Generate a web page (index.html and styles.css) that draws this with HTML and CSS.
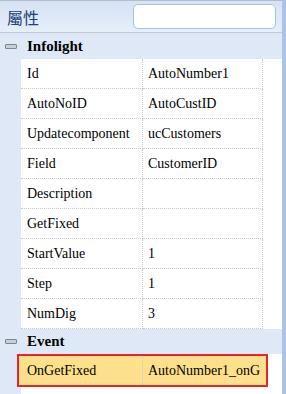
FILE: index.html
```html
<html lang="zh-Hant">
<head>
  <meta charset="UTF-8" />
  <title>屬性</title>
  <link rel="stylesheet" href="styles.css">
</head>
<body>
  <div class="panel">
    <div class="main">
      <div class="header">
        <span class="title">屬性</span>
        <input class="search" type="text">
      </div>

      <div class="group"><span class="toggle"></span>Infolight</div>
      <div class="row"><div class="gutter"></div><div class="name">Id</div><div class="value">AutoNumber1</div><div class="rest"></div></div>
      <div class="row"><div class="gutter"></div><div class="name">AutoNoID</div><div class="value">AutoCustID</div><div class="rest"></div></div>
      <div class="row"><div class="gutter"></div><div class="name">Updatecomponent</div><div class="value">ucCustomers</div><div class="rest"></div></div>
      <div class="row"><div class="gutter"></div><div class="name">Field</div><div class="value">CustomerID</div><div class="rest"></div></div>
      <div class="row"><div class="gutter"></div><div class="name">Description</div><div class="value"></div><div class="rest"></div></div>
      <div class="row"><div class="gutter"></div><div class="name">GetFixed</div><div class="value"></div><div class="rest"></div></div>
      <div class="row"><div class="gutter"></div><div class="name">StartValue</div><div class="value">1</div><div class="rest"></div></div>
      <div class="row"><div class="gutter"></div><div class="name">Step</div><div class="value">1</div><div class="rest"></div></div>
      <div class="row"><div class="gutter"></div><div class="name">NumDig</div><div class="value">3</div><div class="rest"></div></div>

      <div class="group event"><span class="toggle"></span>Event</div>
      <div class="row selected">
        <div class="gutter"></div>
        <div class="cells">
          <div class="name">OnGetFixed</div>
          <div class="value">AutoNumber1_onG</div>
        </div>
        <div class="rest"></div>
      </div>
      <div class="row tail"><div class="gutter"></div><div class="rest"></div></div>
    </div>
    <div class="bar"></div>
  </div>
</body>
</html>
```

FILE: styles.css
```css
body {
  margin: 0;
  width: 286px;
  height: 394px;
  overflow: hidden;
  font-family: "Liberation Serif", "Times New Roman", serif;
  font-size: 14px;
  color: #000;
}
.panel {
  display: flex;
  height: 394px;
}
.main {
  width: 282px;
  background: #fff;
}
.bar {
  width: 4px;
  background: #a9c4ea;
}
.header {
  display: flex;
  align-items: center;
  justify-content: space-between;
  padding: 0 6px 0 7px;
  border-top: 1px solid #b4bcc8;
  border-bottom: 1px solid #c3cbd6;
  background: linear-gradient(#d6e3f4, #e6eefa);
  box-sizing: border-box;
  height: 33px;
}
.title {
  font-family: "Noto Sans CJK TC", "Noto Sans CJK SC", sans-serif;
  font-size: 16px;
  color: #1d3f7a;
}
.search {
  width: 143px;
  height: 25px;
  box-sizing: border-box;
  border: 1px solid #9fc0ec;
  border-radius: 5px;
  background: #fff;
}
.group {
  height: 26px;
  display: flex;
  align-items: center;
  background: #dfe8f6;
  font-weight: bold;
  font-size: 15px;
}
.group.event {
  height: 25px;
}
.toggle {
  width: 10px;
  height: 3px;
  margin: 0 10px 0 5px;
  border: 1px solid #7d8590;
  border-radius: 1px;
  background: #c9ced6;
}
.row {
  display: flex;
  height: 30px;
}
.gutter {
  width: 21px;
  background: #dfe8f6;
}
.name,
.value {
  display: flex;
  align-items: center;
  box-sizing: border-box;
  border-right: 1px dotted #c8c8c8;
  border-bottom: 1px dotted #c8c8c8;
  white-space: nowrap;
  overflow: hidden;
}
.name {
  width: 122px;
  padding-left: 6px;
}
.value {
  width: 120px;
  padding-left: 5px;
}
.rest {
  flex: 1;
  background: #fff;
}
.selected {
  height: 33px;
}
.selected .gutter {
  width: 17px;
}
.cells {
  display: flex;
  width: 251px;
  box-sizing: border-box;
  border: 2px solid #e3262b;
  background: #fde08b;
}
.cells .name {
  width: 124px;
  padding-left: 8px;
  border-bottom: none;
}
.cells .value {
  flex: 1;
  border: none;
  padding-left: 5px;
}
.tail {
  height: 7px;
}
```
